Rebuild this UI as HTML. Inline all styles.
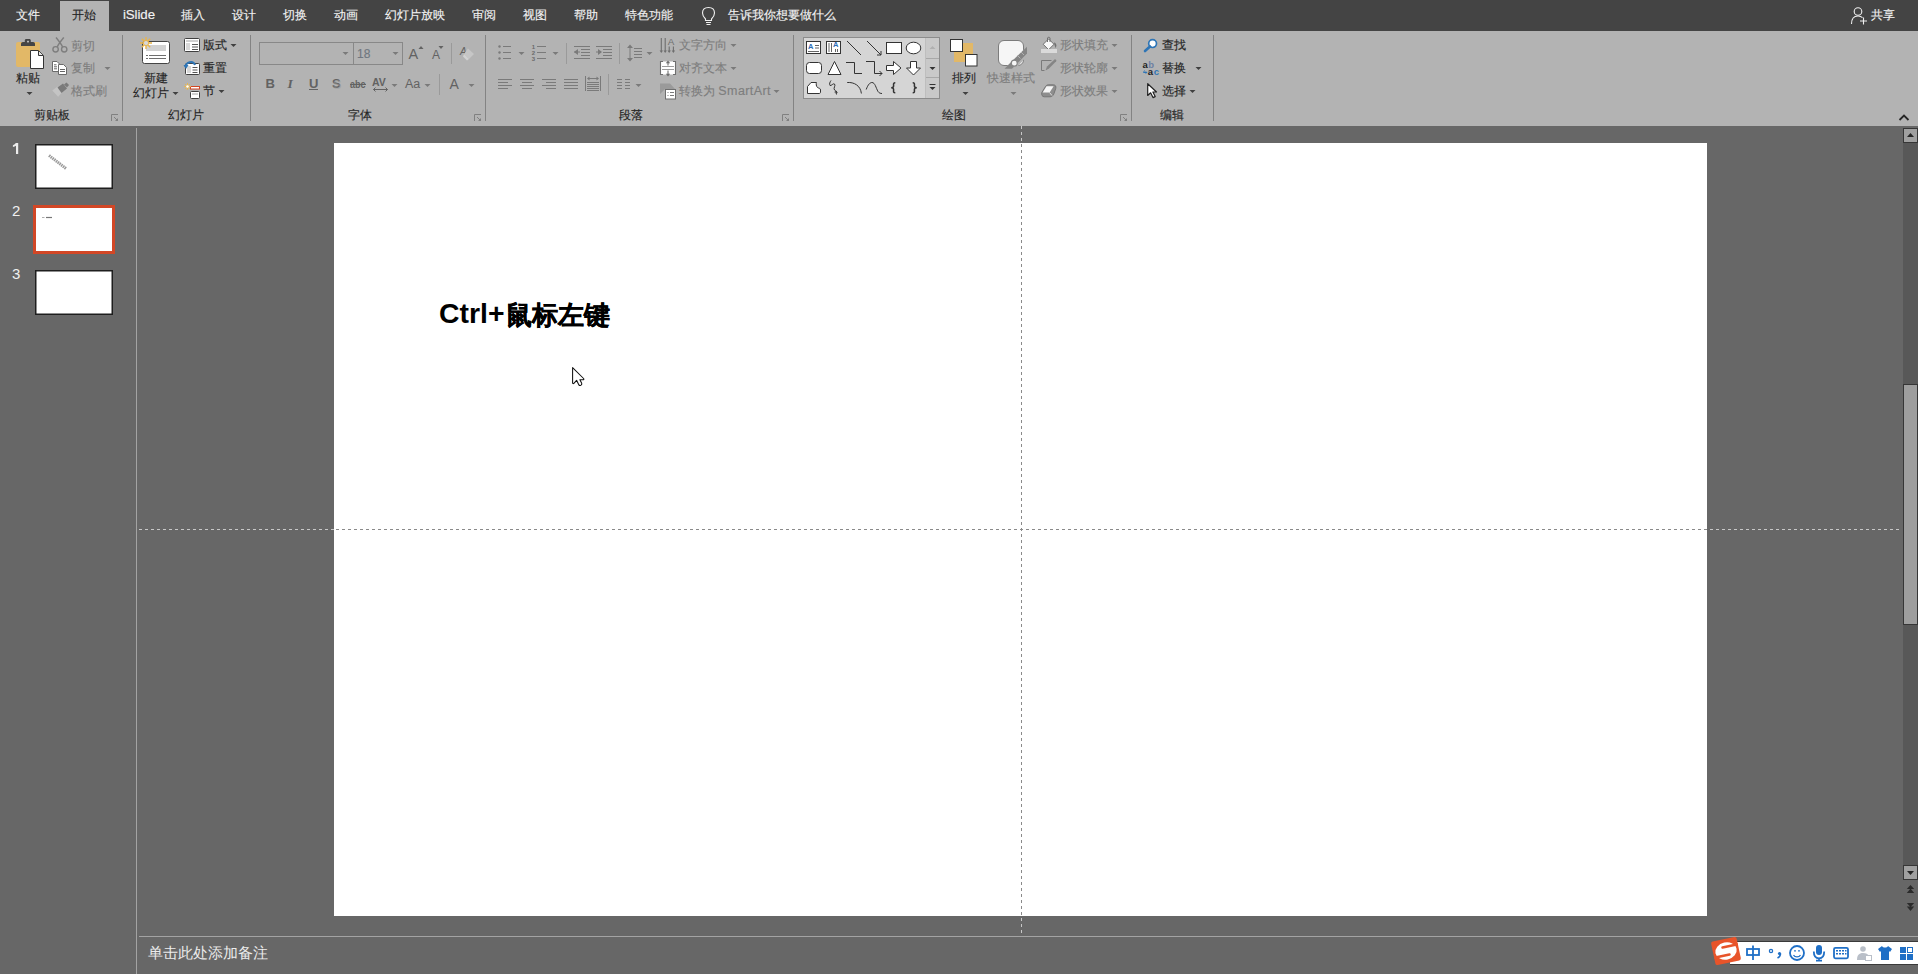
<!DOCTYPE html>
<html><head><meta charset="utf-8">
<style>
*{box-sizing:border-box}
html,body{margin:0;padding:0}
body{width:1918px;height:974px;overflow:hidden;position:relative;background:#676767;font-family:"Liberation Sans",sans-serif;}
.a{position:absolute}
.t{position:absolute;font-size:12px;line-height:20px;white-space:nowrap;-webkit-text-stroke:0.15px currentColor}
.tab{color:#f2f2f2}
.rb{color:#262626}
.dis{color:#7e7e7e}
.sep{position:absolute;width:1px;background:#868686}
.arr{position:absolute;width:0;height:0;border-left:2.5px solid transparent;border-right:2.5px solid transparent;border-top:3px solid #404040}
.arrd{border-top-color:#7e7e7e}
svg{position:absolute;overflow:visible}
</style></head><body>
<!-- tab bar -->
<div class="a" style="left:0;top:0;width:1918px;height:31px;background:#444444"></div>
<div class="a" style="left:60px;top:1px;width:49px;height:30px;background:#b3b3b3"></div>
<div class="t tab" style="left:16px;top:5px">文件</div>
<div class="t" style="left:72px;top:5px;color:#262626">开始</div>
<div class="t tab" style="left:123px;top:5px;font-size:13.3px;letter-spacing:-0.1px">iSlide</div>
<div class="t tab" style="left:181px;top:5px">插入</div>
<div class="t tab" style="left:232px;top:5px">设计</div>
<div class="t tab" style="left:283px;top:5px">切换</div>
<div class="t tab" style="left:334px;top:5px">动画</div>
<div class="t tab" style="left:385px;top:5px">幻灯片放映</div>
<div class="t tab" style="left:472px;top:5px">审阅</div>
<div class="t tab" style="left:523px;top:5px">视图</div>
<div class="t tab" style="left:574px;top:5px">帮助</div>
<div class="t tab" style="left:625px;top:5px">特色功能</div>
<div class="t tab" style="left:728px;top:5px">告诉我你想要做什么</div>
<div class="t tab" style="left:1871px;top:5px">共享</div>

<!-- ribbon -->
<div id="ribbon" class="a" style="left:0;top:31px;width:1918px;height:95px;background:#b3b3b3"></div>


<!-- ribbon text -->
<div class="t rb" style="left:16px;top:68px">粘贴</div>
<div class="t dis" style="left:71px;top:36px">剪切</div>
<div class="t dis" style="left:71px;top:58px">复制</div>
<div class="t dis" style="left:71px;top:81px">格式刷</div>
<div class="t rb" style="left:34px;top:105px">剪贴板</div>
<div class="t rb" style="left:144px;top:68px">新建</div>
<div class="t rb" style="left:133px;top:83px">幻灯片</div>
<div class="t rb" style="left:203px;top:35px">版式</div>
<div class="t rb" style="left:203px;top:58px">重置</div>
<div class="t rb" style="left:203px;top:81px">节</div>
<div class="t rb" style="left:168px;top:105px">幻灯片</div>
<div class="t rb" style="left:348px;top:105px">字体</div>
<div class="t rb" style="left:619px;top:105px">段落</div>
<div class="t dis" style="left:679px;top:35px">文字方向</div>
<div class="t dis" style="left:679px;top:58px">对齐文本</div>
<div class="t dis" style="left:679px;top:81px">转换为 <span style="font-size:12.5px;letter-spacing:0.4px">SmartArt</span></div>
<div class="t rb" style="left:952px;top:68px">排列</div>
<div class="t dis" style="left:987px;top:68px">快速样式</div>
<div class="t dis" style="left:1060px;top:35px">形状填充</div>
<div class="t dis" style="left:1060px;top:58px">形状轮廓</div>
<div class="t dis" style="left:1060px;top:81px">形状效果</div>
<div class="t rb" style="left:942px;top:105px">绘图</div>
<div class="t rb" style="left:1162px;top:35px">查找</div>
<div class="t rb" style="left:1162px;top:58px">替换</div>
<div class="t rb" style="left:1162px;top:81px">选择</div>
<div class="t rb" style="left:1160px;top:105px">编辑</div>
<div class="t" style="left:357px;top:44px;color:#6f7780;font-size:12px">18</div>

<!-- ICONS -->
<svg style="left:0;top:0" width="1918" height="126" viewBox="0 0 1918 126">
<g fill="none" stroke-linecap="butt">
<!-- separators -->
<g fill="#838383">
<rect x="122" y="35" width="1" height="86"/>
<rect x="250" y="35" width="1" height="86"/>
<rect x="485" y="35" width="1" height="86"/>
<rect x="793" y="35" width="1" height="86"/>
<rect x="1131" y="35" width="1" height="86"/>
<rect x="1213" y="35" width="1" height="86"/>
<rect x="451" y="43" width="1" height="21" fill="#9a9a9a"/>
<rect x="439" y="74" width="1" height="21" fill="#9a9a9a"/>
<rect x="566" y="43" width="1" height="21" fill="#9a9a9a"/>
<rect x="619" y="43" width="1" height="21" fill="#9a9a9a"/>
<rect x="608" y="74" width="1" height="21" fill="#9a9a9a"/>
</g>
<!-- dialog launchers -->
<g stroke="#808080" stroke-width="1">
<path d="M111.5,121 V114.5 H118"/><path d="M114,117 L117.5,120.5"/>
<path d="M474.5,121 V114.5 H481"/><path d="M477,117 L480.5,120.5"/>
<path d="M782.5,121 V114.5 H789"/><path d="M785,117 L788.5,120.5"/>
<path d="M1120.5,121 V114.5 H1127"/><path d="M1123,117 L1126.5,120.5"/>
</g>
<g fill="#808080">
<path d="M118,118 V121 H115 Z"/><path d="M481,118 V121 H478 Z"/><path d="M789,118 V121 H786 Z"/><path d="M1127,118 V121 H1124 Z"/>
</g>
<!-- dropdown arrows dark -->
<g fill="#404040">
<path d="M26.5,92 h6 l-3,3 z"/>
<path d="M172.5,92 h6 l-3,3 z"/>
<path d="M230.5,44 h6 l-3,3 z"/>
<path d="M218.5,90 h6 l-3,3 z"/>
<path d="M962.5,92 h6 l-3,3 z"/>
<path d="M1195.5,67 h6 l-3,3 z"/>
<path d="M1189.5,90 h6 l-3,3 z"/>
</g>
<!-- dropdown arrows disabled -->
<g fill="#7a7a7a">
<path d="M104.5,67 h6 l-3,3 z"/>
<path d="M342.5,52 h6 l-3,3 z"/>
<path d="M392.5,52 h6 l-3,3 z"/>
<path d="M391.5,84 h6 l-3,3 z"/>
<path d="M424.5,84 h6 l-3,3 z"/>
<path d="M468.5,84 h6 l-3,3 z"/>
<path d="M518.5,52 h6 l-3,3 z"/>
<path d="M552.5,52 h6 l-3,3 z"/>
<path d="M646.5,52 h6 l-3,3 z"/>
<path d="M635.5,84 h6 l-3,3 z"/>
<path d="M730.5,44 h6 l-3,3 z"/>
<path d="M730.5,67 h6 l-3,3 z"/>
<path d="M773.5,90 h6 l-3,3 z"/>
<path d="M1010.5,92 h6 l-3,3 z"/>
<path d="M1111.5,44 h6 l-3,3 z"/>
<path d="M1111.5,67 h6 l-3,3 z"/>
<path d="M1111.5,90 h6 l-3,3 z"/>
</g>

<!-- PASTE -->
<rect x="16" y="42" width="24" height="25" rx="2" fill="#e2b867"/>
<path d="M21,44 C21,42.8 21.8,42 23,42 H33 C34.2,42 35,42.8 35,44 V46 H21 Z" fill="#454545"/>
<path d="M24.8,42.5 V40.5 C24.8,39.6 25.4,39 26.3,39 H29.3 C30.2,39 30.8,39.6 30.8,40.5 V42.5 Z" fill="#454545"/>
<rect x="27.2" y="40.8" width="1.6" height="1.6" fill="#d8d8d8"/>
<path d="M30.5,50.5 H38.5 L43.5,55.5 V68.5 H30.5 Z" fill="#fff" stroke="#333" stroke-width="1"/>
<path d="M38.5,51 V55.5 H43" fill="#e6e6e6" stroke="#333" stroke-width="1"/>
<!-- SCISSORS -->
<g stroke="#7e7e7e" stroke-width="1.4">
<circle cx="55.6" cy="49.3" r="2.7"/>
<circle cx="64.2" cy="49.3" r="2.7"/>
<path d="M57.2,47 C58.5,44 61,41 63.8,37.5 M62.6,47 C61.3,44 58.8,41 56,37.5"/>
</g>
<!-- COPY -->
<path d="M52.5,61.5 h4.5 l2.5,2.5 v7.5 h-7 z" fill="#fff" stroke="#6a6a6a"/>
<path d="M58.5,64.5 h5 l3,3 v7 h-8 z" fill="#fff" stroke="#6a6a6a"/>
<path d="M54,64.8 h2.5 M54,66.8 h3 M54,68.8 h3 M60,69.5 h5 M60,71.5 h5" stroke="#555" stroke-width="0.9"/>
<!-- FORMAT PAINTER -->
<path d="M52.3,90.6 L57.5,86.5 L62.5,92 L58.1,96.7 Z" fill="#c4c4c4"/>
<path d="M57.5,87.5 L63,83.5 L67,88.5 L61.5,93 Z" fill="#7a7a7a"/>
<path d="M64,84.5 L66.5,82.5 L69,85 L67,87.5 Z" fill="#7a7a7a"/>
<!-- NEW SLIDE -->
<rect x="142.5" y="41.5" width="27" height="22" rx="2" fill="#fff" stroke="#454545"/>
<rect x="146" y="45" width="20" height="6" fill="#d2d2d2"/>
<path d="M146,55.5 h2 M149,55.5 h17 M146,58.5 h2 M149,58.5 h17" stroke="#6e6e6e"/>
<g stroke="#e8b54c" stroke-width="1.4">
<path d="M146,37 v12 M140,43 h12 M141.8,38.8 l8.4,8.4 M150.2,38.8 l-8.4,8.4"/>
</g>
<circle cx="146" cy="43" r="2.6" fill="#d8d8d8" stroke="#e8b54c" stroke-width="1"/>

<!-- LAYOUT -->
<rect x="184.5" y="38.5" width="15" height="13" rx="1" fill="#fff" stroke="#404040"/>
<rect x="186" y="40" width="12" height="2" fill="#d0d0d0"/>
<rect x="186" y="43" width="4" height="7" fill="#d8d8d8"/>
<path d="M192,44.5 h6 M192,47 h6 M192,49.5 h6" stroke="#555"/>
<!-- RESET -->
<rect x="185.5" y="63.5" width="14" height="11" rx="1" fill="#fff" stroke="#404040"/>
<rect x="187" y="66" width="4" height="7" fill="#d8d8d8"/>
<path d="M192.5,67.5 h5 M192.5,70 h5 M192.5,72.5 h5" stroke="#555"/>
<path d="M185.5,67 C186,62 193,60 195,65" stroke="#2e75b6" stroke-width="2"/>
<path d="M183.5,65 L186,69 L188.5,65 Z" fill="#2e75b6"/>
<!-- SECTION -->
<rect x="190" y="86" width="10" height="3.5" fill="#d24726"/>
<rect x="191" y="87" width="8" height="1.5" fill="#fff"/>
<rect x="190.5" y="91.5" width="9" height="7" rx="1" fill="#fff" stroke="#404040"/>
<rect x="192" y="93" width="6" height="2" fill="#d0d0d0"/>
<g stroke="#e8b54c" stroke-width="1"><path d="M187.5,83 v7 M184,86.5 h7 M185,84 l5,5 M190,84 l-5,5"/></g>
<circle cx="187.5" cy="86.5" r="1.3" fill="#fff"/>
</g>
</svg>

<svg style="left:0;top:0" width="1918" height="126" viewBox="0 0 1918 126">
<g fill="none">
<!-- FONT boxes -->
<rect x="259.5" y="42.5" width="143" height="22" stroke="#888"/>
<rect x="353" y="43" width="1" height="21" fill="#888"/>
<!-- grow/shrink -->
<g font-family="Liberation Sans" fill="#626262">
<text x="408.5" y="59" font-size="14.5">A</text>
<text x="432" y="59" font-size="12">A</text>
<text x="460" y="54.5" font-size="10" font-style="italic">A</text>
</g>
<path d="M418.5,49 l2.5,-3 l2.5,3 z" fill="#626262"/>
<path d="M438.5,46 h5 l-2.5,3 z" fill="#626262"/>
<path d="M468,48.5 l6,5.5 l-5,5 l-5,-5 z" fill="#c6c6c6"/>
<path d="M464,54 l5,5 l-2,1.5 l-4,-4 z" fill="#d2d2d2"/>
<!-- B I U S abc -->
<g font-family="Liberation Sans" fill="#626262" font-size="13">
<text x="265.5" y="88" font-weight="bold">B</text>
<text x="287.5" y="88" font-style="italic" font-family="Liberation Serif" font-weight="bold" font-size="13.5">I</text>
<text x="309" y="88" font-weight="bold">U</text>
<text x="332" y="88" font-weight="bold">S</text>
</g>
<rect x="309" y="89" width="9" height="1" fill="#626262"/>
<text x="333" y="89" font-family="Liberation Sans" font-size="12.5" font-weight="bold" fill="#9a9a9a" opacity="0.5">S</text>
<text x="350" y="88" font-family="Liberation Sans" font-size="10.5" font-weight="bold" fill="#626262" textLength="15.5" lengthAdjust="spacingAndGlyphs">abc</text>
<rect x="350" y="84" width="16" height="1" fill="#626262"/>
<text x="372" y="86" font-family="Liberation Sans" font-size="10.5" fill="#626262" font-weight="bold">AV</text>
<path d="M373.5,89.5 h14 M375.5,87.5 l-2,2 l2,2 M385.5,87.5 l2,2 l-2,2" stroke="#626262" stroke-width="1"/>
<text x="405" y="88" font-family="Liberation Sans" font-size="12.5" fill="#626262">Aa</text>
<text x="449.5" y="88.5" font-family="Liberation Sans" font-size="14" fill="#626262">A</text>

<!-- PARAGRAPH -->
<g fill="#7a7a7a">
<circle cx="499.5" cy="46.5" r="1.2"/><circle cx="499.5" cy="52.5" r="1.2"/><circle cx="499.5" cy="58.5" r="1.2"/>
<rect x="503" y="46" width="8" height="1"/><rect x="503" y="52" width="8" height="1"/><rect x="503" y="58" width="8" height="1"/>
<rect x="537" y="46" width="9" height="1"/><rect x="537" y="52" width="9" height="1"/><rect x="537" y="58" width="9" height="1"/>
</g>
<g font-family="Liberation Sans" font-size="6" font-weight="bold" fill="#6a6a6a"><text x="531.8" y="49">1</text><text x="531.8" y="55">2</text><text x="531.8" y="61">3</text></g>
<g stroke="#7a7a7a" stroke-width="1">
<!-- dec indent -->
<path d="M574,46.5 h16 M581,49.5 h9 M581,52.5 h9 M581,55.5 h9 M574,58.5 h16"/>
<path d="M574,52 h6"/>
<!-- inc indent -->
<path d="M596,46.5 h16 M603,49.5 h9 M603,52.5 h9 M603,55.5 h9 M596,58.5 h16"/>
<path d="M596,52 h5"/>
<!-- line spacing -->
<path d="M630,46 v14"/><path d="M634,48.5 h8 M634,51.5 h8 M634,54.5 h8 M634,57.5 h8"/>
<!-- align -->
<path d="M498,79.5 h14 M498,82.5 h10 M498,85.5 h14 M498,88.5 h10"/>
<path d="M520,79.5 h14 M522,82.5 h10 M520,85.5 h14 M522,88.5 h10"/>
<path d="M542,79.5 h14 M546,82.5 h10 M542,85.5 h14 M546,88.5 h10"/>
<path d="M564,79.5 h14 M564,82.5 h14 M564,85.5 h14 M564,88.5 h14"/>
<path d="M585.5,76 v15 M600.5,76 v15 M588,78.5 h10 M587,82.5 h12 M587,84.5 h12 M587,86.5 h12 M587,88.5 h12 M587,90.5 h12"/>
<path d="M617,79.5 h5 M617,82.5 h5 M617,85.5 h5 M617,88.5 h5 M625,79.5 h5 M625,82.5 h5 M625,85.5 h5 M625,88.5 h5"/>
</g>
<g fill="#7a7a7a">
<path d="M574,52 l4,-3 v6 z"/>
<path d="M602,52 l-4,-3 v6 z"/>
<path d="M630,44.5 l-3,3.5 h6 z"/><path d="M630,61.5 l-3,-3.5 h6 z"/>
<path d="M587,78.5 l2.5,-2 v4 z"/><path d="M599,78.5 l-2.5,-2 v4 z"/>
</g>
<!-- text direction icon -->
<g stroke="#6e6e6e" stroke-width="1.1">
<path d="M661.3,38 v13 M665.2,38 v13 M669.2,46.5 v5 M673.4,46.5 v5"/>
</g>
<g fill="#6e6e6e">
<path d="M659.6,50.5 l1.7,2.5 l1.7,-2.5 z"/><path d="M663.5,50.5 l1.7,2.5 l1.7,-2.5 z"/>
<path d="M667.5,50.5 l1.7,2.5 l1.7,-2.5 z"/><path d="M671.7,50.5 l1.7,2.5 l1.7,-2.5 z"/>
</g>
<text x="667.8" y="44.6" font-family="Liberation Sans" font-size="9.8" fill="#6e6e6e">A</text>
<!-- align text icon -->
<rect x="660.5" y="61.5" width="15" height="13" fill="#fff"/>
<path d="M663,61.5 H660.5 V74.5 H663 M673,61.5 H675.5 V74.5 H673" stroke="#6e6e6e" stroke-width="1.1"/>
<path d="M662,66.5 h12 M662,69.5 h12" stroke="#9c9c9c" stroke-width="1"/>
<path d="M668,62 v3.5 M668,70.5 v4" stroke="#6e6e6e" stroke-width="1.1"/>
<path d="M665.8,63.3 l2.2,-2.8 l2.2,2.8 z M665.8,73.7 l2.2,2.8 l2.2,-2.8 z" fill="#6e6e6e"/>
<!-- smartart icon -->
<path d="M660,83.5 h10 l5,5.5 h-10 l-5,5 z" fill="#9a9a9a"/>
<rect x="665.5" y="89.5" width="10" height="9.5" fill="#fff" stroke="#6e6e6e"/>
<path d="M667.5,92.5 h1 M670,92.5 h4 M667.5,95.5 h1 M670,95.5 h4" stroke="#7a7a7a"/>
</g>
</svg>

<svg style="left:0;top:0" width="1918" height="126" viewBox="0 0 1918 126">
<g fill="none">
<!-- GALLERY -->
<rect x="803.5" y="37.5" width="136" height="61" fill="#d5d5d5" stroke="#8c8c8c"/>
<rect x="925.5" y="38" width="1" height="60" fill="#a8a8a8"/>
<rect x="926" y="38" width="13" height="60" fill="#c9c9c9"/>
<rect x="926" y="58" width="13" height="1" fill="#a8a8a8"/>
<rect x="926" y="77" width="13" height="1" fill="#a8a8a8"/>
<path d="M929.5,49 l3,-3 l3,3 z" fill="#b0b0b0"/>
<path d="M929.5,67 h6 l-3,3 z" fill="#333"/>
<path d="M929.5,84.5 h6" stroke="#333"/>
<path d="M929.5,87 h6 l-3,3 z" fill="#333"/>
<g stroke="#333" stroke-width="1">
<!-- row1 -->
<rect x="806.5" y="41.5" width="14" height="12" fill="#fff"/>
<path d="M815,45.5 h4 M815,48 h4 M808,51.5 h11" stroke="#666"/>
<rect x="826.5" y="41.5" width="14" height="12" fill="#fff"/>
<path d="M829,43 v9 M831.5,43 v9 M835.5,49 v3 M837.5,49 v3" stroke="#666"/>
<path d="M847,41 L861,55"/>
<path d="M867,41 L881,55 M877,55 h4 v-4"/>
<rect x="886.5" y="42.5" width="15" height="11" fill="#fff"/>
<ellipse cx="913.5" cy="48" rx="7.3" ry="5.8" fill="#fff"/>
<!-- row2 -->
<rect x="806.5" y="62.5" width="15" height="11" rx="3" fill="#fff"/>
<path d="M828,74.5 L834.5,61.5 L841,74.5 Z" fill="#fff"/>
<path d="M846,62.5 H854.5 V73.5 H862"/>
<path d="M866,61.5 H874.5 V73.5 H882 M879.5,71 l2.5,2.5 l-2.5,2.5"/>
<path d="M886.5,65.5 H893.5 V61.5 L901,68 L893.5,74.5 V70.5 H886.5 Z" fill="#fff"/>
<path d="M910.5,61.5 H916.5 V68 H920.5 L913.5,75 L906.5,68 H910.5 Z" fill="#fff"/>
<!-- row3 -->
<path d="M807.5,93.5 V86.5 L811,82.5 H816.5 C816,84 816,86 817.5,87.5 C818.5,88.3 820.5,88 820.5,90 V92 C820.5,93 820,93.5 819,93.5 Z" fill="#fff"/>
<path d="M831,80.5 C830,82 829,84 830,85.5 C831.5,86 833,83 834.5,84 C836,85.5 833,88 834.5,90 C836.5,91.5 838,92.5 836.5,93 C835,93.5 834.5,91.5 836,91 C837,91 836.5,93 836.5,94.5"/>
<path d="M847.2,82.5 C854,82 860.5,85.5 861.4,93.5"/>
<path d="M866.2,89.5 C868,84.5 870,82.5 872,82.5 C875,82.5 876,88 878,91.5 C879,93 880.5,93.5 882,93.5"/>
<path d="M895.3,82.8 C893,82.8 893.6,84.5 893.6,86 C893.6,87.3 893,87.8 891.2,87.8 C893,87.8 893.6,88.3 893.6,89.6 C893.6,91.2 893,92.8 895.3,92.8" stroke-width="1.5"/>
<path d="M912.7,82.8 C915,82.8 914.4,84.5 914.4,86 C914.4,87.3 915,87.8 916.8,87.8 C915,87.8 914.4,88.3 914.4,89.6 C914.4,91.2 915,92.8 912.7,92.8" stroke-width="1.5"/>
</g>
<g font-family="Liberation Sans" font-weight="bold" font-size="7.5" fill="#2e6db5">
<text x="808" y="49">A</text><text x="833" y="47">A</text>
</g>

<!-- ARRANGE -->
<rect x="954" y="43" width="19" height="19" fill="#e2b867"/>
<rect x="950.5" y="39.5" width="12" height="12" fill="#fff" stroke="#333"/>
<rect x="965.5" y="54.5" width="11.5" height="11.5" fill="#fff" stroke="#333"/>
<!-- QUICK STYLES -->
<rect x="998.5" y="40.5" width="25" height="25" rx="5.5" fill="#f6f6f6" stroke="#7c7c7c"/>
<path d="M1028.5,45 V54.5 L1014,70.5 H1002.5 Z" fill="#b3b3b3"/>
<path d="M1027,46.8 V53.5 L1012,68.8 H1004.5 Z" fill="#858585"/>
<path d="M1017.5,55.5 l3,3 M1021,52 l3,3" stroke="#b3b3b3" stroke-width="1"/>
<circle cx="1014.3" cy="63.2" r="3" fill="#f6f6f6" stroke="#858585" stroke-width="1.2"/>
<!-- SHAPE FILL -->
<path d="M1043.2,44.3 L1048.6,38.9 L1054,44.3 L1048.6,49.7 Z" fill="#f8f8f8" stroke="#707070"/>
<path d="M1047.5,42 V38 C1047.5,37 1050,37 1050,38 V42" stroke="#707070" stroke-width="1"/>
<path d="M1054,42.5 C1056.5,43 1057,46 1055.5,48 L1054.5,45 Z" fill="#707070"/>
<rect x="1041" y="49" width="16" height="4" fill="#dadada"/>
<!-- SHAPE OUTLINE -->
<path d="M1041.5,70.5 V60.5 H1051.5 M1041.5,70.5 H1044.5" stroke="#7a7a7a"/>
<path d="M1045.5,70.5 L1047,66.5 L1054.5,59.5 C1055.5,58.8 1057,60.3 1056.2,61.3 L1049,68.5 Z" fill="#858585"/>
<!-- SHAPE EFFECTS -->
<path d="M1041.8,92.5 L1045.5,86.5 C1046.3,85.3 1047.3,84.8 1048.6,84.8 H1053.3 C1055.3,84.8 1056.3,86.3 1055.8,88.3 L1054,93.5 C1053.3,95.5 1052,96.8 1050,96.8 H1044.3 C1042.3,96.8 1041.2,95 1041.8,92.5 Z" fill="#8e8e8e" stroke="#707070" stroke-width="0.9"/>
<path d="M1042.6,92.6 L1046.5,86.3 H1053.6 L1049.6,92.6 Z" fill="#f6f6f6"/>
<path d="M1049.6,92.6 L1052,95.5" stroke="#f0f0f0" stroke-width="0.8"/>
<!-- FIND -->
<circle cx="1152.6" cy="43.6" r="3.9" fill="#fff" stroke="#2e75b6" stroke-width="1.7"/>
<path d="M1150,46.5 L1145,51" stroke="#2e75b6" stroke-width="2.6" stroke-linecap="round"/>
<!-- REPLACE -->
<g font-family="Liberation Sans" font-size="9.5" font-weight="bold">
<text x="1142.6" y="67.6" fill="#222">a</text>
<text x="1148.3" y="67.6" fill="#6d80a3">b</text>
<text x="1147.8" y="74.8" fill="#222">a</text>
<text x="1153.8" y="74.8" fill="#2e75b6">c</text>
</g>
<path d="M1144.5,70.5 L1143.5,72.5 H1146" stroke="#2e75b6" stroke-width="1"/>
<path d="M1145.5,71 l2,1.5 l-2,1.5 z" fill="#2e75b6"/>
<!-- SELECT -->
<path d="M1147.7,83.7 V95.5 L1150.6,92.8 L1153,97.6 L1155.2,96.6 L1152.9,92 H1156.5 Z" fill="#fff" stroke="#222" stroke-width="1.2" stroke-linejoin="round"/>

<!-- collapse ribbon -->
<path d="M1899.5,120 L1904,115.5 L1908.5,120" stroke="#262626" stroke-width="1.8"/>
<!-- lightbulb -->
<path d="M705.5,19 C703,16.5 702.5,14.5 702.5,13 C702.5,9.5 705,7.5 708.5,7.5 C712,7.5 714.5,9.5 714.5,13 C714.5,14.5 714,16.5 711.5,19 V20.5 H705.5 Z" stroke="#f0f0f0" stroke-width="1.1"/>
<path d="M706,22.5 h5 M706.5,24.5 h4" stroke="#f0f0f0" stroke-width="1.1"/>
<!-- share person -->
<circle cx="1858" cy="11.5" r="3.8" stroke="#f0f0f0" stroke-width="1.1"/>
<path d="M1851.5,24 C1851.5,19 1854,16 1858,16 C1860,16 1861.5,16.7 1862.5,17.7" stroke="#f0f0f0" stroke-width="1.1"/>
<path d="M1863.5,17.5 v7 M1860,21 h7" stroke="#f0f0f0" stroke-width="1.1"/>
</g>
</svg>

<!-- left panel -->
<div class="a" style="left:136px;top:128px;width:1px;height:846px;background:#a3a3a3"></div>
<svg style="left:0;top:0" width="40" height="160"><path d="M15.9,143 H18.2 V154 H16 V145.8 C15.2,146.4 14.1,146.8 12.9,147 V145.2 C14.2,144.8 15.2,144 15.9,143 Z" fill="#ececec"/></svg>
<div class="a" style="left:35px;top:144px;width:78px;height:45px;background:#fff;border:1px solid #1e1e1e;box-shadow:inset 0 0 0 0.5px #1e1e1e"></div>
<div class="a" style="left:12px;top:201px;font-size:15px;line-height:20px;color:#f0f0f0">2</div>
<div class="a" style="left:33px;top:205px;width:82px;height:49px;background:#fff;border:3px solid #d24726"></div>
<div class="a" style="left:12px;top:264px;font-size:15px;line-height:20px;color:#f0f0f0">3</div>
<div class="a" style="left:35px;top:270px;width:78px;height:45px;background:#fff;border:1px solid #1e1e1e;box-shadow:inset 0 0 0 0.5px #1e1e1e"></div>

<!-- slide -->
<div class="a" style="left:334px;top:143px;width:1373px;height:773px;background:#fff"></div>
<div class="a" style="left:439px;top:294px;font-weight:bold;font-size:28.4px;line-height:40px;color:#000;white-space:nowrap"><span style="position:relative;top:-1px">Ctrl+</span><span style="font-size:26px;margin-left:2px;position:relative;top:0px;-webkit-text-stroke:0.35px #000">鼠标左键</span></div>

<!-- guides -->
<svg style="left:0;top:0" width="1918" height="974">
<line x1="139" y1="529.5" x2="334" y2="529.5" stroke="#c8c8c8" stroke-width="1" stroke-dasharray="3 3"/>
<line x1="334" y1="529.5" x2="1707" y2="529.5" stroke="#8a8a8a" stroke-width="1" stroke-dasharray="3 3" stroke-dashoffset="4"/>
<line x1="1707" y1="529.5" x2="1900" y2="529.5" stroke="#c8c8c8" stroke-width="1" stroke-dasharray="3 3" stroke-dashoffset="3"/>
<line x1="1021.5" y1="126" x2="1021.5" y2="143" stroke="#c8c8c8" stroke-width="1" stroke-dasharray="3 3"/>
<line x1="1021.5" y1="143" x2="1021.5" y2="916" stroke="#8a8a8a" stroke-width="1" stroke-dasharray="3 3" stroke-dashoffset="5"/>
<line x1="1021.5" y1="916" x2="1021.5" y2="934" stroke="#c8c8c8" stroke-width="1" stroke-dasharray="3 3" stroke-dashoffset="4"/>
</svg>

<!-- scrollbar -->
<div class="a" style="left:1903px;top:143px;width:15px;height:722px;background:#585858"></div>
<div class="a" style="left:1903px;top:128px;width:15px;height:15px;background:#a0a0a0;border:1px solid #363636"></div>
<div class="a" style="left:1903px;top:384px;width:15px;height:241px;background:#9e9e9e;border:1px solid #363636"></div>
<div class="a" style="left:1903px;top:865px;width:15px;height:15px;background:#a0a0a0;border:1px solid #363636"></div>

<!-- notes -->
<div class="a" style="left:139px;top:936px;width:1779px;height:1px;background:#a3a3a3"></div>
<div class="a" style="left:148px;top:943px;font-size:14.67px;line-height:20px;color:#ececec;white-space:nowrap">单击此处添加备注</div>

<!-- IME -->
<div class="a" style="left:1730px;top:941px;width:188px;height:24px;background:#fff;border-top:1px solid #3a3a3a;border-bottom:1px solid #3a3a3a"></div>
<!-- thumbs content -->
<svg style="left:0;top:0" width="1918" height="974">
<g stroke="#9a9a9a" stroke-width="3" stroke-dasharray="1.5 0.7"><path d="M49,155.5 L66,168.5"/></g>
<path d="M42,217.5 h2.5" stroke="#999" stroke-width="0.8"/>
<path d="M46,217.5 h6" stroke="#777" stroke-width="1.2"/>
<!-- scroll arrows -->
<path d="M1907,137 L1910.5,133 L1914,137 Z" fill="#262626"/>
<path d="M1907,871 L1910.5,875 L1914,871 Z" fill="#262626"/>
<path d="M1906.8,889 L1910.5,885 L1914.2,889 Z M1906.8,893 L1910.5,888.5 L1914.2,893 Z" fill="#2b2b2b"/>
<path d="M1906.8,903 L1910.5,907 L1914.2,903 Z M1906.8,906.5 L1910.5,911 L1914.2,906.5 Z" fill="#2b2b2b"/>

<!-- cursor -->
<path d="M572.6,367.6 V382.8 Q572.8,384 573.9,383.4 L576.6,380.3 L578.9,384.9 Q579.6,385.9 580.7,385.3 L581.3,384.9 Q582,384.3 581.7,383.3 L579.9,379.7 H583.3 Q584.3,379.4 583.6,378.5 Z" fill="#fff" stroke="#111" stroke-width="1.05" stroke-linejoin="round"/>
<!-- IME -->
<g transform="rotate(-12 1726 951)">
<rect x="1713" y="939" width="26" height="24" rx="2" fill="#e8542a"/>
<ellipse cx="1726" cy="951" rx="10.8" ry="8.6" fill="#fff"/>
<path d="M1739,945.6 H1723.3 A1.3,1.3 0 0 0 1723.3,948.2 H1739 Z" fill="#e8542a"/>
<path d="M1713,953.8 H1728.7 A1.3,1.3 0 0 1 1728.7,956.4 H1713 Z" fill="#e8542a"/>
</g>
<g fill="none" stroke="#1f6fc6" stroke-width="1.8">
<rect x="1747" y="949" width="12" height="6"/>
<path d="M1753,945.5 v14.5"/>
<circle cx="1771" cy="951" r="1.6" stroke-width="1.3"/>
<path d="M1780.5,953.5 C1780.5,955.5 1779.5,957 1777.5,958" stroke-width="1.6"/>
<circle cx="1797" cy="953" r="7"/>
<path d="M1793.5,955 C1795,957.5 1799,957.5 1800.5,955" stroke-width="1.3"/>
<path d="M1813.8,951.5 C1813.8,956 1816,958.3 1819,958.3 C1822,958.3 1824.2,956 1824.2,951.5 M1819,958.3 v2.2 M1816,960.6 h6"/>
<rect x="1834" y="947.8" width="14" height="10.5" rx="1.5"/>
</g>
<rect x="1816" y="945" width="6" height="10" rx="3" fill="#1f6fc6"/>
<circle cx="1795" cy="950.8" r="0.9" fill="#1f6fc6"/><circle cx="1799" cy="950.8" r="0.9" fill="#1f6fc6"/>
<circle cx="1779.5" cy="953.5" r="1.6" fill="#1f6fc6"/>
<g fill="#1f6fc6">
<rect x="1836" y="950" width="2" height="1.5"/><rect x="1839" y="950" width="2" height="1.5"/><rect x="1842" y="950" width="2" height="1.5"/><rect x="1845" y="950" width="1.5" height="1.5"/>
<rect x="1836" y="953" width="2" height="1.5"/><rect x="1839" y="953" width="2" height="1.5"/><rect x="1842" y="953" width="2" height="1.5"/><rect x="1845" y="953" width="1.5" height="1.5"/>
</g>
<circle cx="1863" cy="949" r="2.8" fill="#b9bfc8"/>
<path d="M1857,960 C1857,955 1859,953 1863,953 C1866,953 1868,954 1869,956 V960 Z" fill="#b9bfc8"/>
<rect x="1865.5" y="955.5" width="6" height="5" fill="#fff" stroke="#b9bfc8"/>
<path d="M1882,946 L1878,949 L1880,952 L1881,951 V960 H1889 V951 L1890,952 L1892,949 L1888,946 C1887,948 1883,948 1882,946 Z" fill="#1f6fc6"/>
<g fill="#1f6fc6"><rect x="1900" y="947" width="6" height="6"/><rect x="1900" y="954" width="6" height="6"/><rect x="1907" y="954" width="6" height="6"/></g>
<rect x="1907.5" y="947.5" width="5" height="5" fill="none" stroke="#1f6fc6"/>
</svg>

</body></html>
